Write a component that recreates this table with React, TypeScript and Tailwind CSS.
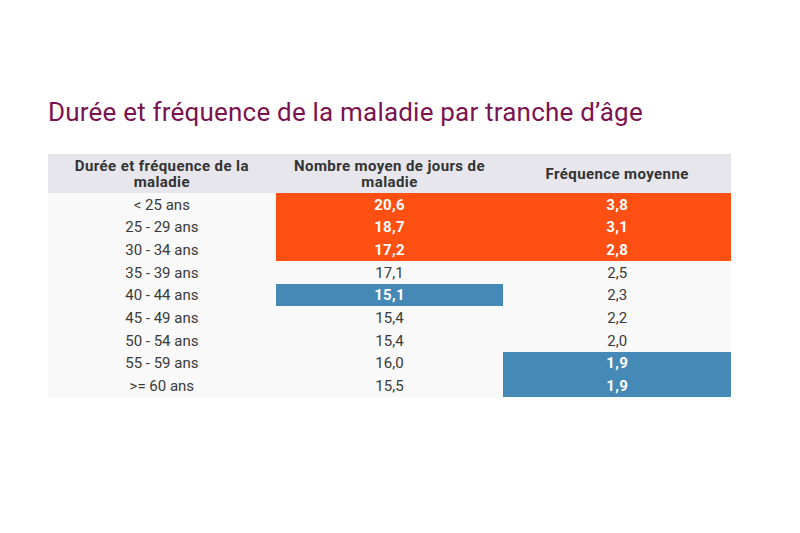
import React from "react"

type Tone = "orange" | "blue" | null

interface Row {
    age: string
    days: string
    daysTone: Tone
    freq: string
    freqTone: Tone
}

const rows: Row[] = [
    { age: "< 25 ans", days: "20,6", daysTone: "orange", freq: "3,8", freqTone: "orange" },
    { age: "25 - 29 ans", days: "18,7", daysTone: "orange", freq: "3,1", freqTone: "orange" },
    { age: "30 - 34 ans", days: "17,2", daysTone: "orange", freq: "2,8", freqTone: "orange" },
    { age: "35 - 39 ans", days: "17,1", daysTone: null, freq: "2,5", freqTone: null },
    { age: "40 - 44 ans", days: "15,1", daysTone: "blue", freq: "2,3", freqTone: null },
    { age: "45 - 49 ans", days: "15,4", daysTone: null, freq: "2,2", freqTone: null },
    { age: "50 - 54 ans", days: "15,4", daysTone: null, freq: "2,0", freqTone: null },
    { age: "55 - 59 ans", days: "16,0", daysTone: null, freq: "1,9", freqTone: "blue" },
    { age: ">= 60 ans", days: "15,5", daysTone: null, freq: "1,9", freqTone: "blue" },
]

function Cell({ value, tone }: { value: string; tone: Tone }) {
    if (tone === "orange") {
        return (
            <div className="flex items-center justify-center bg-[#ff4f12] pt-[2px] font-bold tracking-[0.3px] text-white">
                {value}
            </div>
        )
    }
    if (tone === "blue") {
        return (
            <div className="flex items-center justify-center bg-[#4589b6] pt-[2px] font-bold tracking-[0.3px] text-white">
                {value}
            </div>
        )
    }
    return <div className="flex items-center justify-center pt-[2px] text-[#3a3a3a]">{value}</div>
}

export default function App() {
    return (
        <div className="h-[533px] w-[800px] bg-white font-['Roboto','Liberation_Sans',sans-serif]">
            <div className="px-[48px] pt-[96px]">
                <h1 className="text-[26px] leading-[32px] font-normal tracking-[0.2px] text-[#7a1450]">
                    Durée et fréquence de la maladie par tranche d’âge
                </h1>
                <div className="mt-[26px] w-[683px] bg-[#f9f9f9] text-[15px]">
                    <div className="grid h-[39px] grid-cols-3 bg-[#e6e6ec] text-[15px] leading-[16px] font-bold tracking-[0.4px] text-[#333333]">
                        <div className="flex items-center justify-center px-5 text-center">
                            Durée et fréquence de la maladie
                        </div>
                        <div className="flex items-center justify-center px-3 text-center">
                            Nombre moyen de jours de maladie
                        </div>
                        <div className="flex items-center justify-center px-3 text-center">
                            Fréquence moyenne
                        </div>
                    </div>
                    {rows.map((row) => (
                        <div key={row.age} className="grid h-[22.67px] grid-cols-3 leading-none">
                            <div className="flex items-center justify-center pt-[2px] text-[#3a3a3a]">{row.age}</div>
                            <Cell value={row.days} tone={row.daysTone} />
                            <Cell value={row.freq} tone={row.freqTone} />
                        </div>
                    ))}
                </div>
            </div>
        </div>
    )
}
